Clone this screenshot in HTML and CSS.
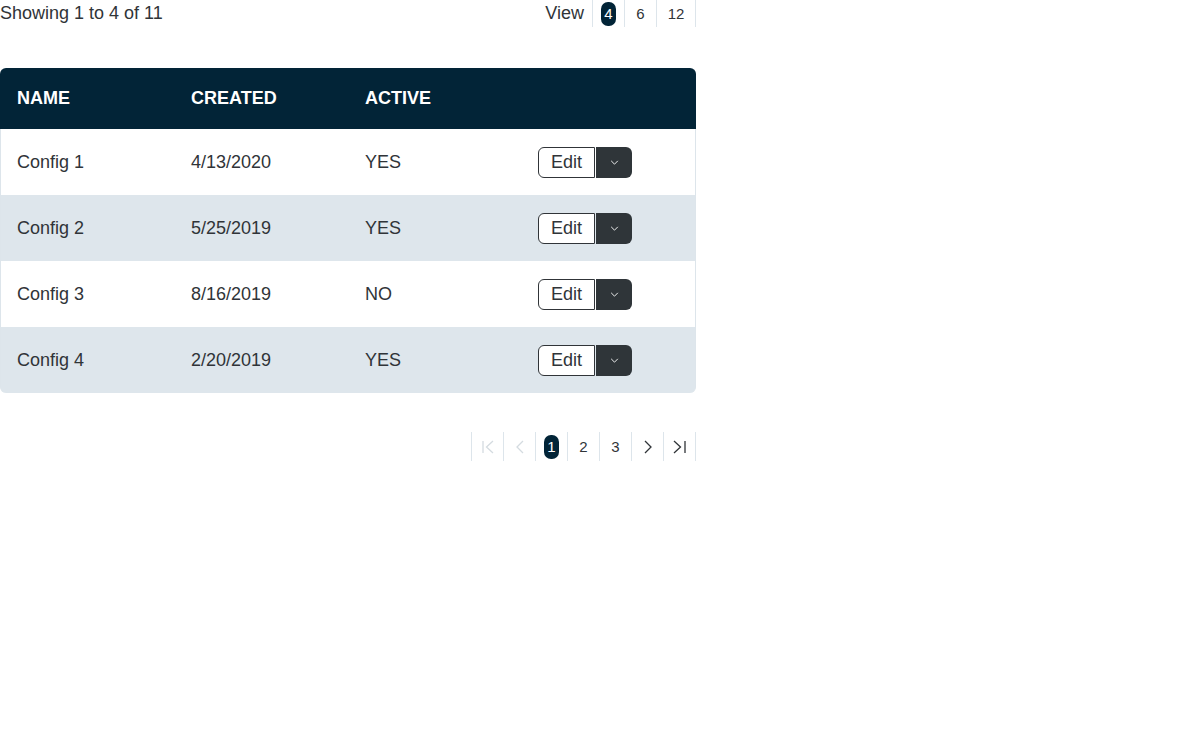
FILE: index.html
```html
<!DOCTYPE html>
<html>
<head>
<meta charset="utf-8">
<link rel="stylesheet" href="styles.css">
</head>
<body>
<div class="wrap">
  <div class="topbar">
    <div class="showing">Showing 1 to 4 of 11</div>
    <div class="view">
      <span class="view-label">View</span>
      <div class="pager top">
        <span class="cell"><span class="pill">4</span></span>
        <span class="cell">6</span>
        <span class="cell last">12</span>
      </div>
    </div>
  </div>

  <table class="grid">
    <thead>
      <tr><th>NAME</th><th>CREATED</th><th>ACTIVE</th><th></th></tr>
    </thead>
    <tbody>
      <tr><td>Config 1</td><td>4/13/2020</td><td>YES</td><td><div class="btns"><button class="edit">Edit</button><button class="drop"><svg width="10" height="6" viewBox="0 0 10 6"><path d="M1 1l4 4 4-4" fill="none" stroke="#fff" stroke-width="1.1"/></svg></button></div></td></tr>
      <tr class="alt"><td>Config 2</td><td>5/25/2019</td><td>YES</td><td><div class="btns"><button class="edit">Edit</button><button class="drop"><svg width="10" height="6" viewBox="0 0 10 6"><path d="M1 1l4 4 4-4" fill="none" stroke="#fff" stroke-width="1.1"/></svg></button></div></td></tr>
      <tr><td>Config 3</td><td>8/16/2019</td><td>NO</td><td><div class="btns"><button class="edit">Edit</button><button class="drop"><svg width="10" height="6" viewBox="0 0 10 6"><path d="M1 1l4 4 4-4" fill="none" stroke="#fff" stroke-width="1.1"/></svg></button></div></td></tr>
      <tr class="alt"><td>Config 4</td><td>2/20/2019</td><td>YES</td><td><div class="btns"><button class="edit">Edit</button><button class="drop"><svg width="10" height="6" viewBox="0 0 10 6"><path d="M1 1l4 4 4-4" fill="none" stroke="#fff" stroke-width="1.1"/></svg></button></div></td></tr>
    </tbody>
  </table>

  <div class="bottombar">
    <div class="pager bottom">
      <span class="cell dis"><svg width="14" height="14" viewBox="0 0 14 14"><path d="M2 1v12M12 1L5.5 7 12 13" fill="none" stroke="currentColor" stroke-width="1.3"/></svg></span>
      <span class="cell dis"><svg width="14" height="14" viewBox="0 0 14 14"><path d="M10 1L4 7l6 6" fill="none" stroke="currentColor" stroke-width="1.3"/></svg></span>
      <span class="cell"><span class="pill">1</span></span>
      <span class="cell">2</span>
      <span class="cell">3</span>
      <span class="cell"><svg width="14" height="14" viewBox="0 0 14 14"><path d="M4 1l6 6-6 6" fill="none" stroke="currentColor" stroke-width="1.3"/></svg></span>
      <span class="cell last"><svg width="16" height="14" viewBox="0 0 16 14"><path d="M2 1l6.5 6L2 13M13 1v12" fill="none" stroke="currentColor" stroke-width="1.3"/></svg></span>
    </div>
  </div>
</div>
</body>
</html>
```

FILE: styles.css
```css
html, body {
  margin: 0;
  padding: 0;
  background: #fff;
}
body {
  font-family: "Liberation Sans", Arial, sans-serif;
  color: #303438;
}
.wrap {
  width: 696px;
}
.topbar {
  display: flex;
  justify-content: space-between;
  align-items: flex-start;
  height: 27px;
}
.showing {
  font-size: 18px;
  line-height: 26px;
}
.view {
  display: flex;
  align-items: flex-start;
}
.view-label {
  font-size: 18px;
  line-height: 26px;
  margin-right: 8px;
}
.pager {
  display: flex;
}
.pager .cell {
  box-sizing: border-box;
  width: 32px;
  border-left: 1px solid #dde5eb;
  display: flex;
  align-items: center;
  justify-content: center;
  font-size: 15px;
  color: #303438;
}
.pager .cell.last {
  border-right: 1px solid #dde5eb;
  width: 33px;
}
.pager.top .cell {
  height: 27px;
}
.pager.top .cell.last {
  width: 40px;
}
.pager.bottom .cell {
  height: 29px;
}
.pager .cell.dis {
  color: #d4dbe0;
}
.pill {
  display: inline-flex;
  align-items: center;
  justify-content: center;
  width: 15px;
  height: 24px;
  border-radius: 7px;
  background: #022437;
  color: #fff;
  font-size: 15px;
}
.grid {
  margin-top: 41px;
  width: 696px;
  border-collapse: separate;
  border-spacing: 0;
  table-layout: fixed;
}
.grid th {
  background: #022437;
  color: #fff;
  font-weight: bold;
  font-size: 18px;
  text-align: left;
  height: 61px;
  padding: 0 0 0 17px;
  box-sizing: border-box;
}
.grid th:first-child { border-top-left-radius: 6px; }
.grid th:last-child { border-top-right-radius: 6px; }
.grid td {
  font-size: 18px;
  height: 66px;
  padding: 0 0 0 17px;
  box-sizing: border-box;
    vertical-align: middle;
}
.grid td:first-child { border-left: 1px solid #dde5eb; padding-left: 16px; }
.grid td:last-child { border-right: 1px solid #dde5eb; padding-left: 16px; }
.grid tr.alt td { background: #dee6ec; }
.grid tbody tr:last-child td:first-child { border-bottom-left-radius: 6px; }
.grid tbody tr:last-child td:last-child { border-bottom-right-radius: 6px; }
.grid th:nth-child(1), .grid td:nth-child(1) { width: 174px; }
.grid th:nth-child(2), .grid td:nth-child(2) { width: 174px; }
.grid th:nth-child(3), .grid td:nth-child(3) { width: 174px; }
.btns {
  display: flex;
  gap: 1px;
}
.edit {
  box-sizing: border-box;
  width: 57px;
  height: 31px;
  border: 1px solid #303438;
  border-radius: 6px 0 0 6px;
  background: #fff;
  font-family: "Liberation Sans", Arial, sans-serif;
  font-size: 18px;
  color: #303438;
  padding: 0;
}
.drop {
  box-sizing: border-box;
  width: 36px;
  height: 31px;
  border: none;
  border-radius: 0 6px 6px 0;
  background: #2f3539;
  display: flex;
  align-items: center;
  justify-content: center;
  padding: 0;
}
.drop svg { width: 9px; height: 5px; }
.bottombar {
  margin-top: 39px;
  display: flex;
  justify-content: flex-end;
}
```
